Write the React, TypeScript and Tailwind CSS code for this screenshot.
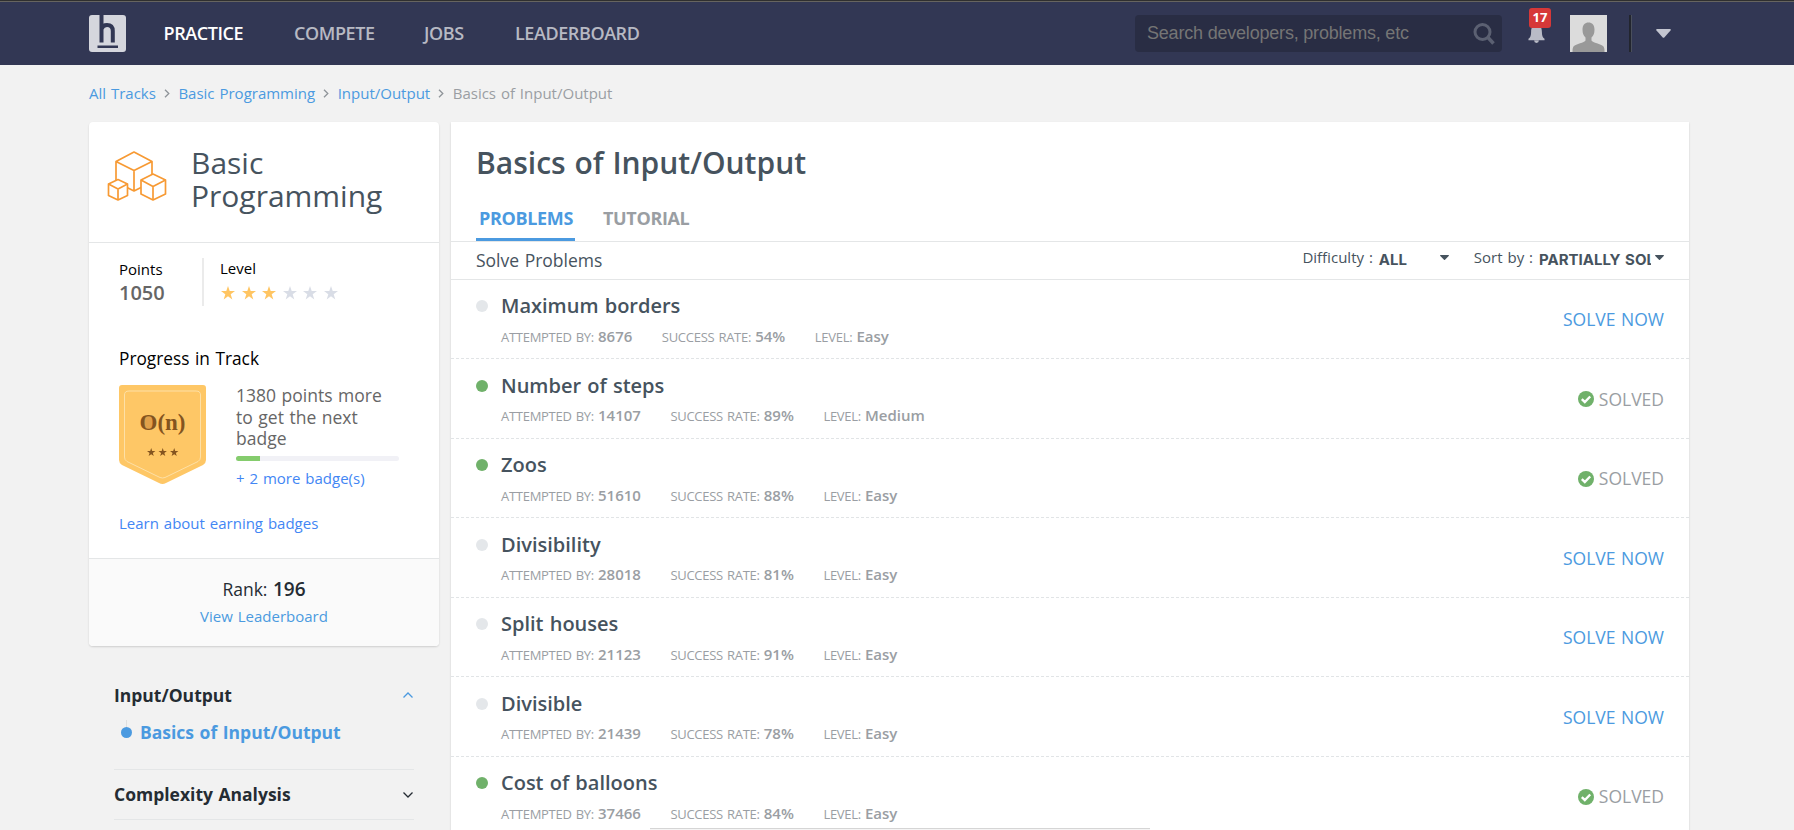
import React from "react";

type Problem = { name: string; attempts: string; rate: string; level: string; solved: boolean };

const problems: Problem[] = [
  { name: "Maximum borders", attempts: "8676", rate: "54%", level: "Easy", solved: false },
  { name: "Number of steps", attempts: "14107", rate: "89%", level: "Medium", solved: true },
  { name: "Zoos", attempts: "51610", rate: "88%", level: "Easy", solved: true },
  { name: "Divisibility", attempts: "28018", rate: "81%", level: "Easy", solved: false },
  { name: "Split houses", attempts: "21123", rate: "91%", level: "Easy", solved: false },
  { name: "Divisible", attempts: "21439", rate: "78%", level: "Easy", solved: false },
  { name: "Cost of balloons", attempts: "37466", rate: "84%", level: "Easy", solved: true },
];

const STAR = "M7 0l1.7 5.1H14l-4.3 3.2 1.6 5.2L7 10.3l-4.3 3.2 1.6-5.2L0 5.1h5.3z";

function Header() {
  return (
    <header className="h-[65px] shrink-0 border-t border-[#2f2f2f] bg-[#323754]">
      <div className="h-px bg-[#66645f]" />
      <div className="ml-[89px] flex h-[63px] w-[1600px] items-center">
        <svg className="mr-[37.500px] h-[37px] w-[37px]" viewBox="0 0 37 37">
          <rect width="37" height="37" rx="3" fill="#d5d6dd" />
          <path d="M12.500 0V27.500M12.500 14C13.500 11 15.500 10 18 10C22 10 23.800 12 23.800 16V27.500" fill="none" stroke="#323754" strokeWidth="4" />
          <rect x="8.500" y="30.500" width="20.500" height="2.500" fill="#323754" />
        </svg>
        <nav className="flex text-[18px] font-semibold tracking-[-0.42px] text-[#b7b9c3]">
          <a className="w-[130.500px] text-white">PRACTICE</a>
          <a className="w-[130px]">COMPETE</a>
          <a className="w-[91px]">JOBS</a>
          <a>LEADERBOARD</a>
        </nav>
        <div className="ml-auto flex h-[37px] w-[367px] items-center justify-between rounded bg-[#292d44] pr-[7px] pl-3">
          <span className="font-['Liberation_Sans'] text-[18px] tracking-[-0.2px] text-[#757575] [word-spacing:0]">Search developers, problems, etc</span>
          <svg className="h-[22px] w-[22px]" viewBox="0 0 22 22" fill="none" stroke="#5b6072" strokeWidth="3">
            <circle cx="9.500" cy="9" r="7.500" />
            <path d="M15 14.500L20.500 20.500" strokeWidth="3.500" />
          </svg>
        </div>
        <div className="relative ml-[26px] flex h-[37px] w-[17px] items-end pb-[9px]">
          <svg className="h-[18px] w-[17px]" viewBox="0 0 18 19" fill="#b9bbc6">
            <path d="M9 0C5 0 3.300 3 3.300 7C3.300 11 2.500 13 .5 14.500V16.200H17.500V14.500C15.500 13 14.700 11 14.700 7C14.700 3 13 0 9 0ZM6.500 16.500A2.500 2.500 0 0 0 11.500 16.500Z" />
          </svg>
          <span className="absolute -top-[7px] left-[1px] flex h-5 w-[22px] items-center justify-center rounded-[3px] bg-[#d63838] text-[13px] font-bold text-white">17</span>
        </div>
        <svg className="ml-[25px] h-[37px] w-[37px]" viewBox="0 0 37 37">
          <rect width="37" height="37" fill="#dcdcdc" />
          <path d="M18.500 7.500C22 7.500 24.500 10 24.500 14.500C24.500 18.500 23.500 20.500 21.500 22.500V25.500C22.500 28 31 28.500 33.500 31.500C34.500 33 34.500 35 34.500 37H2.500C2.500 35 2.500 33 3.500 31.500C6 28.500 14.500 28 15.500 25.500V22.500C13.500 20.500 12.500 18.500 12.500 14.500C12.500 10 15 7.500 18.500 7.500Z" fill="#999" />
        </svg>
        <div className="ml-[22px] h-[37px] w-[3px] border-r border-[#4a4f5c] bg-[#22252e]" />
        <svg className="mr-[18px] ml-[24px] h-[9px] w-[15px]" viewBox="0 0 15 9" fill="#c3c5d0">
          <path d="M1 0H14Q15.300 .3 14.500 1.500L8.500 8.200Q7.500 9.200 6.500 8.200L.5 1.500Q-.3 .3 1 0Z" />
        </svg>
      </div>
    </header>
  );
}

function Crumb({ children }: { children: string }) {
  return (
    <>
      <a className="text-[#4b9ae0]">{children}</a>
      <svg className="mr-[8.500px] ml-[8px] h-[9px] w-[6px]" viewBox="0 0 6 9" fill="none" stroke="#8f9499" strokeWidth="1.300">
        <path d="M1 .7L4.800 4.500L1 8.300" />
      </svg>
    </>
  );
}

function Cubes() {
  return (
    <svg className="h-[50px] w-[60px]" viewBox="0 0 60 50" fill="#fff" stroke="#f79a34" strokeWidth="1.700" strokeLinejoin="round">
      <path d="M27 1L45 10.500V31L27 40L9 31V10.500ZM9 10.500L27 19.500L45 10.500M27 19.500V40" />
      <path d="M11 28.500L20.500 33V44.500L11 49L1.500 44.500V33Z" />
      <path d="M1.500 33L11 38L20.500 33M11 38V49" fill="none" />
      <path d="M46 23L58.500 29V43L46 49L34 43V29Z" />
      <path d="M34 29L46 35.500L58.500 29M46 35.500V49" fill="none" />
    </svg>
  );
}

function Badge() {
  return (
    <svg className="h-[99px] w-[87px]" viewBox="0 0 87 99">
      <path d="M3 0H84Q87 0 87 3V75Q87 78 84 80L47 98Q43.500 99.800 40 98L3 80Q0 78 0 75V3Q0 0 3 0Z" fill="#fec766" />
      <path d="M10 6H77Q81.500 6 81.500 10V72Q81.500 75 79 76.500L46 92.500Q43.500 93.500 41 92.500L8 76.500Q5.500 75 5.500 72V10Q5.500 6 10 6Z" fill="none" stroke="#fde0a6" strokeWidth="1" />
      <ellipse cx="29.500" cy="37.500" rx="5.500" ry="7" fill="#e0a04a" />
      <text x="43.500" y="44.500" textAnchor="middle" fontFamily="Liberation Serif, serif" fontWeight="700" fontSize="23" fill="#84541f" wordSpacing="0">O(n)</text>
      {[28, 39.5, 51].map((x) => (
        <path key={x} d={STAR} transform={`translate(${x} 63) scale(.6)`} fill="#84541f" />
      ))}
    </svg>
  );
}

function Sidebar() {
  return (
    <aside className="w-[350px] shrink-0">
      <section className="h-[524px] overflow-hidden rounded bg-white shadow-[0_1px_2px_rgba(0,0,0,0.15)]">
        <div className="flex h-[121px] border-b border-[#e4e6e7] pt-[29px] pl-[18px]">
          <Cubes />
          <h2 className="ml-[24px] -mt-[5px] text-[30px] leading-[33px] text-[#46535e]">Basic<br />Programming</h2>
        </div>
        <div className="flex h-[87px] pt-[15px] pl-[30px]">
          <div className="w-[83px]">
            <div className="text-[15px] leading-[23px] text-black">Points</div>
            <div className="-mt-px text-[20px] leading-[26px] font-semibold text-[#666]">1050</div>
          </div>
          <div className="h-12 w-[2px] bg-[#ebebeb]" />
          <div className="ml-4">
            <div className="-mt-px text-[15px] leading-[23px] text-black">Level</div>
            <div className="mt-[6px] ml-[1px] flex gap-[6.500px]">
              {[1, 2, 3, 4, 5, 6].map((n) => (
                <svg key={n} className="h-[14px] w-[14px]" viewBox="0 0 14 14" fill={n <= 3 ? "#ffc562" : "#d9dde6"}>
                  <path d={STAR} />
                </svg>
              ))}
            </div>
          </div>
        </div>
        <div className="h-[228px] px-[30px] pt-[17px]">
          <h3 className="text-[17.300px] leading-6 text-black">Progress in Track</h3>
          <div className="mt-[14px] flex">
            <Badge />
            <div className="ml-[30px] w-[163px]">
              <p className="text-[17.500px] leading-[21.500px] text-[#666]">1380 points more<br />to get the next<br />badge</p>
              <div className="mt-[6.500px] h-[5px] overflow-hidden rounded-sm bg-[#f1f1f6]">
                <div className="h-full w-6 bg-[#85cc6d]" />
              </div>
              <a className="mt-[5px] block text-[15px] leading-6 text-[#4286f4]">+ 2 more badge(s)</a>
            </div>
          </div>
          <a className="mt-[21px] block text-[15px] leading-6 text-[#4286f4]">Learn about earning badges</a>
        </div>
        <div className="h-[88px] border-t border-[#e4e6e7] bg-[#fafafa] pt-[17px] text-center text-[17.500px] leading-[27px] text-[#252c33]">
          Rank: <b className="text-[19px] font-semibold">196</b>
          <a className="block text-[15px] leading-[27px] text-[#4b9ae0]">View Leaderboard</a>
        </div>
      </section>
      <nav className="mx-[25px] mt-[35px] text-[17.500px] font-bold text-[#252c33]">
        <div className="flex h-7 items-center justify-between">
          Input/Output
          <svg className="mr-px h-[6px] w-[10px]" viewBox="0 0 10 6" fill="none" stroke="#4b9ae0" strokeWidth="1.300"><path d="M.5 5.500L5 1L9.500 5.500" /></svg>
        </div>
        <div className="flex h-[61px] border-b border-[#e4e6e7] text-[#4b9ae0]">
          <div className="mt-[11px] ml-[7px] flex w-[11px] flex-col items-center">
            <div className="h-[7px] w-px bg-[#e0e0e0]" />
            <div className="h-[11px] w-[11px] shrink-0 rounded-full bg-[#4b9ae0]" />
          </div>
          <a className="mt-[9px] ml-2 leading-7">Basics of Input/Output</a>
        </div>
        <div className="flex h-[50px] items-center justify-between border-b border-[#e4e6e7]">
          Complexity Analysis
          <svg className="mr-px h-[6px] w-[10px]" viewBox="0 0 10 6" fill="none" stroke="#252c33" strokeWidth="1.300"><path d="M.5 .5L5 5L9.500 .5" /></svg>
        </div>
      </nav>
    </aside>
  );
}

function Caret() {
  return (
    <svg className="mb-1 h-[5px] w-[9px]" viewBox="0 0 9 5" fill="#46535e"><path d="M.5 0H8.500Q9.300 .3 8.700 1L5 4.700Q4.500 5.200 4 4.700L.3 1Q-.3 .3 .5 0Z" /></svg>
  );
}

function Row({ p }: { p: Problem }) {
  return (
    <li className="flex h-[79.500px] border-b border-dashed border-[#e1e4e6] pr-[25px] pl-[25px]">
      <div className={p.solved ? "mt-[20.500px] h-3 w-3 rounded-full bg-[#70b16a]" : "mt-[20.500px] h-3 w-3 rounded-full bg-[#e4e7ea]"} />
      <div className="ml-[13px]">
        <h4 className="mt-[12.500px] text-[20px] leading-[28px] font-semibold text-[#46535e]">{p.name}</h4>
        <div className="mt-[4.500px] flex gap-[29.500px] text-[13px] leading-[22px] tracking-[-0.28px] text-[#9a9ea3]">
          <span>ATTEMPTED BY: <b className="text-[15px] font-semibold tracking-normal">{p.attempts}</b></span>
          <span>SUCCESS RATE: <b className="text-[15px] font-semibold tracking-normal">{p.rate}</b></span>
          <span>LEVEL: <b className="text-[15px] font-semibold tracking-normal">{p.level}</b></span>
        </div>
      </div>
      <div className="mt-[26px] ml-auto flex h-7 items-center text-[17.500px]">
        {p.solved ? (
          <>
            <svg className="mr-[5px] h-4 w-4" viewBox="0 0 16 16"><circle cx="8" cy="8" r="8" fill="#70b16a" /><path d="M3.800 8.200L6.800 11L12.200 5.500" fill="none" stroke="#fff" strokeWidth="2.400" /></svg>
            <span className="text-[#9a9ea3]">SOLVED</span>
          </>
        ) : (
          <a className="text-[#4b9ae0]">SOLVE NOW</a>
        )}
      </div>
    </li>
  );
}

function Main() {
  return (
    <main className="ml-3 h-[720px] w-[1238px] bg-white shadow-[0_1px_2px_rgba(0,0,0,0.15)]">
      <h1 className="h-[72px] pt-[18.500px] pl-[25px] text-[30px] leading-[44px] font-semibold text-[#46535e]">Basics of Input/Output</h1>
      <div className="flex h-12 items-stretch border-b border-[#e4e6e7] pl-[25px] text-[18px] font-bold tracking-[-0.35px] text-[#9a9ea3]">
        <a className="w-[99px] border-b-[3px] border-[#4b9ae0] pt-[11px] pl-[3px] text-[#4b9ae0]">PROBLEMS</a>
        <a className="pt-[11px] pl-[28px]">TUTORIAL</a>
      </div>
      <div className="flex h-[37.500px] items-center border-b border-[#e4e6e7] px-[25px] pb-px text-[15px] text-[#46535e]">
        <span className="text-[17.500px]">Solve Problems</span>
        <span className="mb-[5px] ml-auto mr-[6px]">Difficulty :</span>
        <b className="mr-[31px] w-[30px] font-['Inter'] text-[15px] font-bold">ALL</b>
        <Caret />
        <span className="mb-[5px] mr-[6px] ml-[25px]">Sort by :</span>
        <b className="mr-[4px] w-[112px] overflow-hidden font-['Inter'] text-[15px] font-bold whitespace-nowrap">PARTIALLY SOLVED</b>
        <Caret />
      </div>
      <ul>{problems.map((p) => <Row key={p.name} p={p} />)}</ul>
    </main>
  );
}

export default function App() {
  return (
    <div className="relative flex h-[830px] flex-col overflow-hidden bg-[#f2f2f2] font-['Open_Sans',sans-serif] [word-spacing:1px]">
      <Header />
      <div className="ml-[89px] w-[1600px]">
        <div className="flex h-[57px] items-center text-[15px] leading-[57px]">
          <Crumb>All Tracks</Crumb>
          <Crumb>Basic Programming</Crumb>
          <Crumb>Input/Output</Crumb>
          <span className="text-[#9a9ea3]">Basics of Input/Output</span>
        </div>
        <div className="flex items-start">
          <Sidebar />
          <Main />
        </div>
      </div>
      <div className="absolute bottom-0 left-[650px] h-[2px] w-[500px] border-t border-[#d5d5d5] bg-[#f5f5f5]" />
    </div>
  );
}
